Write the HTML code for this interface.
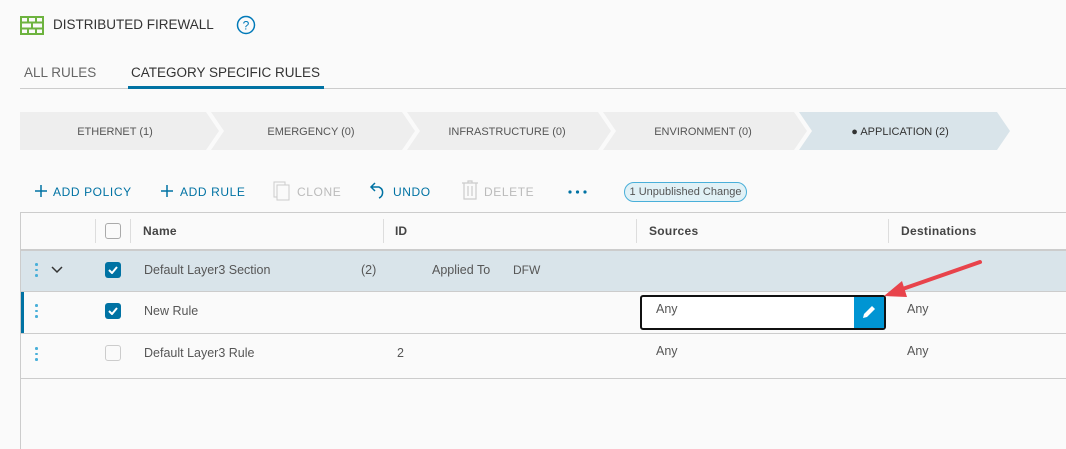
<!DOCTYPE html>
<html><head><style>
*{margin:0;padding:0;box-sizing:border-box}
body{width:1066px;height:449px;background:#fafafa;font-family:"Liberation Sans",sans-serif;position:relative;overflow:hidden;color:#444}
.a{position:absolute;white-space:nowrap}
.hl{position:absolute;height:1px;background:#ccc}
.vl{position:absolute;width:1px;background:#ddd}
.tb{color:#0072a3;font-size:12px;letter-spacing:.6px;top:185px}
.dis{color:#bbb}
.cb{position:absolute;width:16px;height:16px;border-radius:3px}
.cb.on{background:#0072a3}
.cb.off{border:1px solid #aaa;background:#fafafa}
.dots{position:absolute;width:3px}
.dots i{display:block;width:2.5px;height:2.5px;background:#49afd9;border-radius:50%;margin-bottom:3px}
.t13{font-size:12.5px;color:#565656}
</style></head><body>
<svg class="a" style="left:20px;top:16px" width="24" height="19" viewBox="0 0 24 19"><rect x="1" y="1" width="22" height="17" fill="none" stroke="#6db33f" stroke-width="2"/><path d="M1 6.5H23M1 12.5H23M8 1V6.5M16 1V6.5M12 6.5V12.5M8 12.5V18M16 12.5V18" stroke="#6db33f" stroke-width="2"/></svg>
<div class="a" style="left:53px;top:17px;font-size:13.5px;color:#333">DISTRIBUTED FIREWALL</div>
<svg class="a" style="left:236px;top:15px" width="20" height="20"><circle cx="10" cy="10" r="8.5" fill="none" stroke="#0079b8" stroke-width="1.5"/><text x="10" y="14.5" font-size="12" text-anchor="middle" fill="#0079b8" font-family="Liberation Sans">?</text></svg>
<div class="a" style="left:24px;top:65px;font-size:13.5px;color:#666">ALL RULES</div>
<div class="a" style="left:131px;top:65px;font-size:13.5px;color:#333">CATEGORY SPECIFIC RULES</div>
<div class="hl" style="left:20px;top:88px;width:1046px"></div>
<div class="a" style="left:128px;top:86px;width:196px;height:3px;background:#0072a3"></div>
<svg class="a" style="left:0;top:112px" width="1066" height="38">
<polygon points="20,0 206,0 219,19 206,38 20,38" fill="#eee"/>
<polygon points="211,0 402,0 415,19 402,38 211,38 224,19" fill="#eee"/>
<polygon points="407,0 598,0 611,19 598,38 407,38 420,19" fill="#eee"/>
<polygon points="603,0 794,0 807,19 794,38 603,38 616,19" fill="#eee"/>
<polygon points="799,0 997,0 1010,19 997,38 799,38 812,19" fill="#d9e4ea"/>
<g font-family="Liberation Sans" font-size="11" fill="#555" text-anchor="middle">
<text x="115" y="23">ETHERNET (1)</text><text x="311" y="23">EMERGENCY (0)</text><text x="507" y="23">INFRASTRUCTURE (0)</text><text x="703" y="23">ENVIRONMENT (0)</text><text x="900" y="23" fill="#333">● APPLICATION (2)</text></g>
</svg>
<svg class="a" style="left:34px;top:184px" width="14" height="14"><path d="M7 1V13M1 7H13" stroke="#0072a3" stroke-width="1.5"/></svg>
<div class="a tb" style="left:53px">ADD POLICY</div>
<svg class="a" style="left:160px;top:184px" width="14" height="14"><path d="M7 1V13M1 7H13" stroke="#0072a3" stroke-width="1.5"/></svg>
<div class="a tb" style="left:180px">ADD RULE</div>
<svg class="a" style="left:273px;top:181px" width="18" height="20"><rect x="1" y="1" width="11" height="15" fill="none" stroke="#ccc"/><rect x="4" y="4" width="12" height="15" fill="#fafafa" stroke="#ccc"/></svg>
<div class="a tb dis" style="left:297px">CLONE</div>
<svg class="a" style="left:369px;top:181px" width="18" height="18"><path d="M6 2L2 6L6 10M2 6H10A6 6 0 0 1 10 17" fill="none" stroke="#0072a3" stroke-width="1.5"/></svg>
<div class="a tb" style="left:393px">UNDO</div>
<svg class="a" style="left:461px;top:180px" width="18" height="20"><path d="M1 3H17M7 3V1H11V3M3 3V19H15V3M7 6V16M11 6V16" fill="none" stroke="#ccc" stroke-width="1.2"/></svg>
<div class="a tb dis" style="left:484px">DELETE</div>
<svg class="a" style="left:568px;top:190px" width="20" height="4"><circle cx="2" cy="2" r="1.6" fill="#0072a3"/><circle cx="9.5" cy="2" r="1.6" fill="#0072a3"/><circle cx="17" cy="2" r="1.6" fill="#0072a3"/></svg>
<div class="a" style="left:624px;top:182px;width:123px;height:20px;border:1px solid #49afd9;border-radius:10px;background:#e1f1f6;font-size:11px;color:#555;text-align:center;line-height:18px">1 Unpublished Change</div>
<div class="a" style="left:20px;top:212px;width:1046px;height:237px;border-left:1px solid #ccc;border-top:1px solid #ccc"></div>
<div class="vl" style="left:95px;top:219px;height:24px"></div>
<div class="vl" style="left:130px;top:219px;height:24px"></div>
<div class="vl" style="left:383px;top:219px;height:24px"></div>
<div class="vl" style="left:636px;top:219px;height:24px"></div>
<div class="vl" style="left:888px;top:219px;height:24px"></div>
<div class="cb off" style="left:105px;top:223px"></div>
<div class="a" style="left:143px;top:224px;font-size:12px;color:#444;font-weight:bold;letter-spacing:.3px">Name</div>
<div class="a" style="left:395px;top:224px;font-size:12px;color:#444;font-weight:bold">ID</div>
<div class="a" style="left:649px;top:224px;font-size:12px;color:#444;font-weight:bold;letter-spacing:.3px">Sources</div>
<div class="a" style="left:901px;top:224px;font-size:12px;color:#444;font-weight:bold;letter-spacing:.3px">Destinations</div>
<div class="a" style="left:21px;top:249px;width:1045px;height:2px;background:#ccc"></div>
<div class="a" style="left:21px;top:251px;width:1045px;height:40px;background:#d9e4ea"></div>
<div class="hl" style="left:21px;top:291px;width:1045px"></div>
<div class="dots" style="left:35px;top:263px"><i></i><i></i><i></i></div>
<svg class="a" style="left:51px;top:266px" width="12" height="8"><path d="M1 1L6 6L11 1" fill="none" stroke="#333" stroke-width="1.5"/></svg>
<div class="cb on" style="left:105px;top:262px"></div>
<svg class="a" style="left:108px;top:266px" width="10" height="8"><path d="M1 4L4 7L9 1" fill="none" stroke="#fff" stroke-width="2"/></svg>
<div class="a t13" style="left:144px;top:263px">Default Layer3 Section</div>
<div class="a t13" style="left:361px;top:263px">(2)</div>
<div class="a t13" style="left:432px;top:263px">Applied To</div>
<div class="a t13" style="left:513px;top:263px;font-size:12px">DFW</div>
<div class="a" style="left:21px;top:292px;width:3px;height:41px;background:#0072a3"></div>
<div class="dots" style="left:35px;top:304px"><i></i><i></i><i></i></div>
<div class="cb on" style="left:105px;top:303px"></div>
<svg class="a" style="left:108px;top:307px" width="10" height="8"><path d="M1 4L4 7L9 1" fill="none" stroke="#fff" stroke-width="2"/></svg>
<div class="a t13" style="left:144px;top:304px">New Rule</div>
<div class="a" style="left:640px;top:295px;width:246px;height:35px;border:2px solid #111;border-radius:3px;background:#fff"></div>
<div class="a t13" style="left:656px;top:302px">Any</div>
<div class="a" style="left:854px;top:297px;width:30px;height:31px;background:#0095d3"></div>
<svg class="a" style="left:861px;top:304px" width="16" height="16"><path d="M2 14L3 10L11 2L14 5L6 13Z" fill="#fff"/></svg>
<div class="a t13" style="left:907px;top:302px">Any</div>
<div class="hl" style="left:21px;top:333px;width:1045px"></div>
<div class="dots" style="left:35px;top:347px"><i></i><i></i><i></i></div>
<div class="cb off" style="left:105px;top:345px;border-color:#ccc"></div>
<div class="a t13" style="left:144px;top:346px">Default Layer3 Rule</div>
<div class="a t13" style="left:397px;top:346px">2</div>
<div class="a t13" style="left:656px;top:344px">Any</div>
<div class="a t13" style="left:907px;top:344px">Any</div>
<div class="hl" style="left:21px;top:378px;width:1045px"></div>
<svg class="a" style="left:880px;top:255px" width="110" height="50"><path d="M100 7L14 37" stroke="#e8434b" stroke-width="4" stroke-linecap="round"/><polygon points="4,41 22,26 27,42" fill="#e8434b"/></svg>
</body></html>
